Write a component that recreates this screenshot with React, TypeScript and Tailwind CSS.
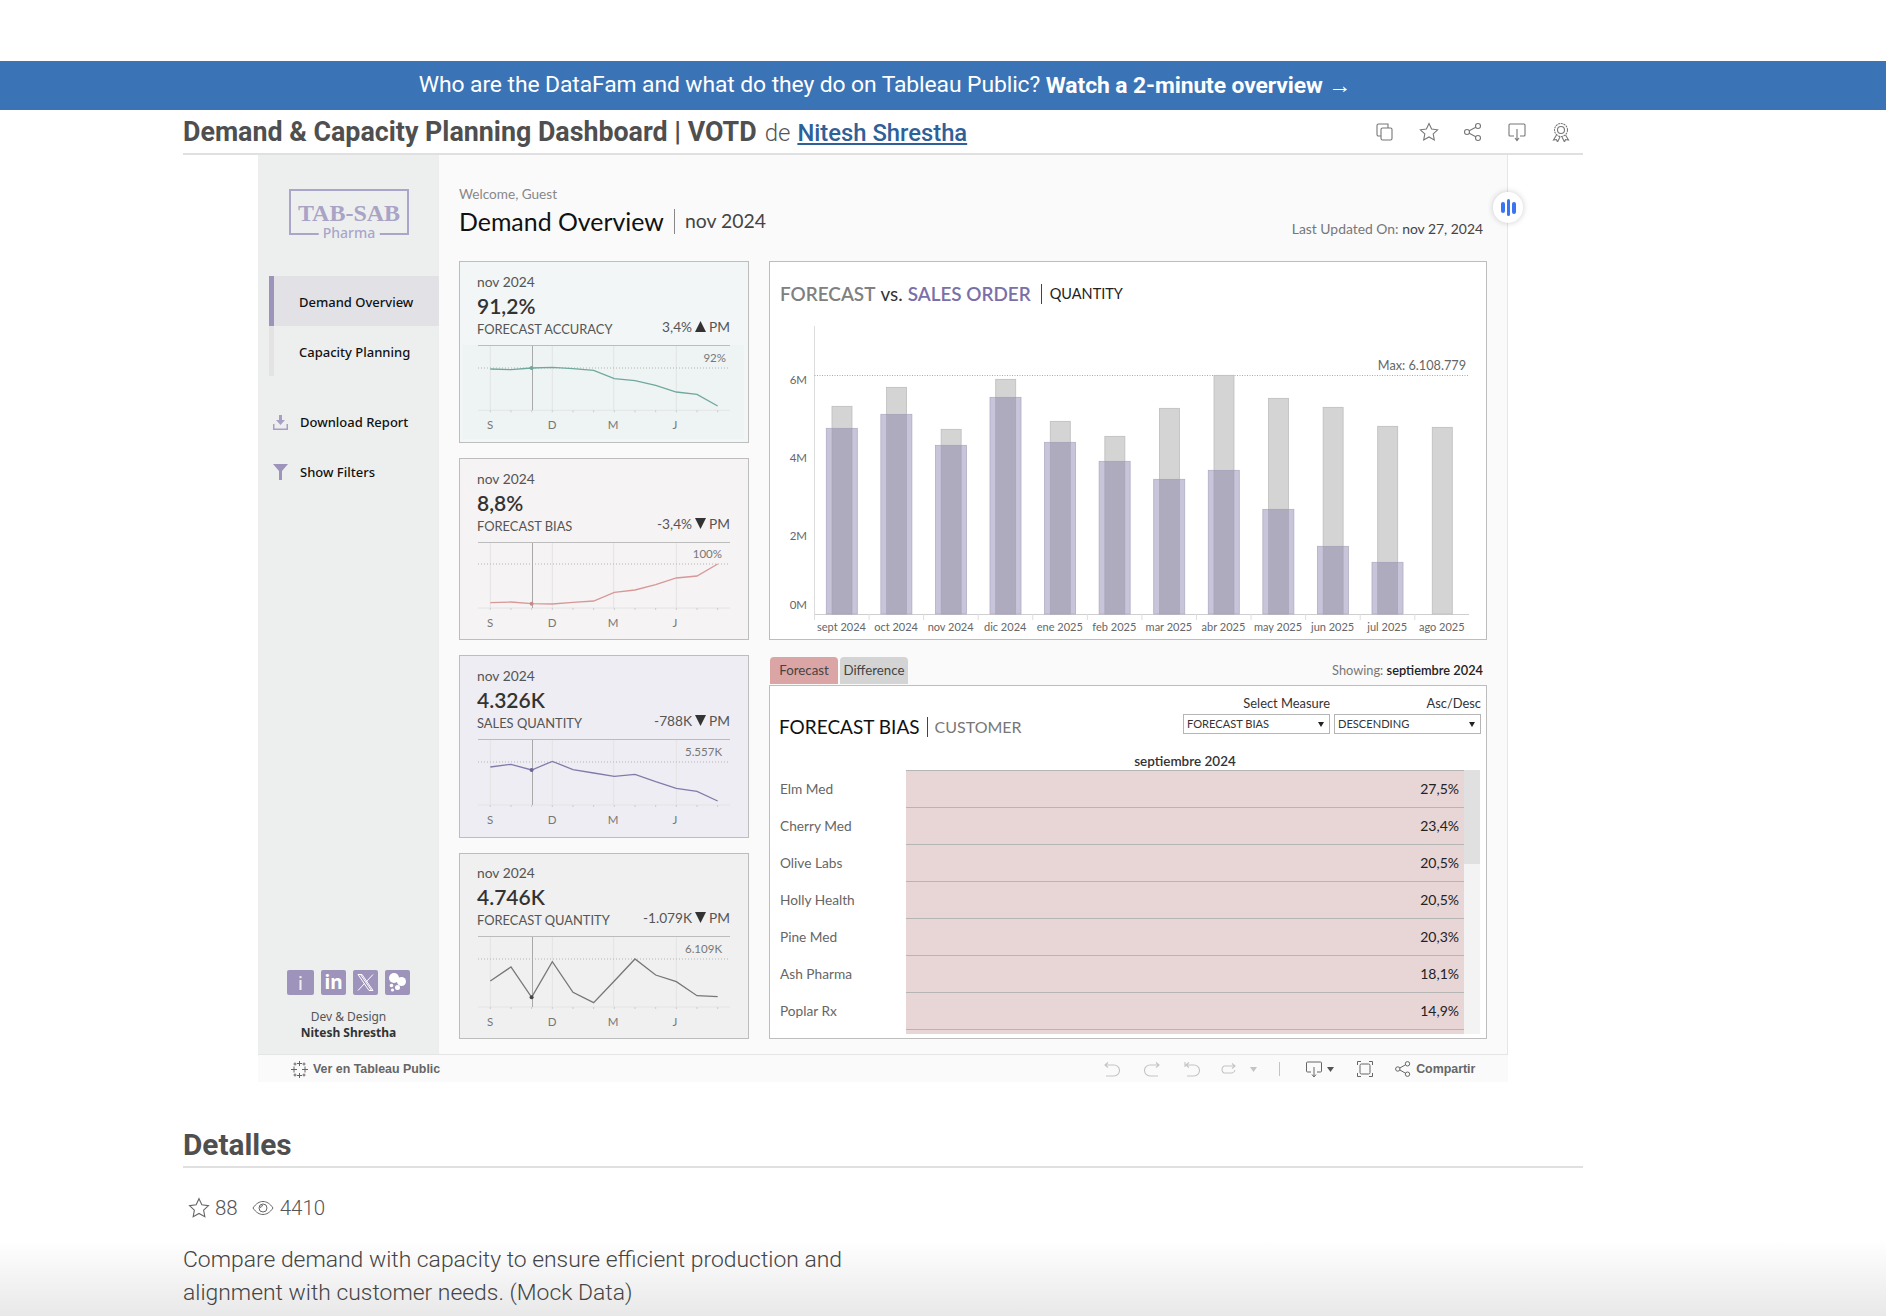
const months = ['sept 2024', 'oct 2024', 'nov 2024', 'dic 2024', 'ene 2025', 'feb 2025', 'mar 2025', 'abr 2025', 'may 2025', 'jun 2025', 'jul 2025', 'ago 2025'];
const forecastTops = [439, 382, 508, 358, 484, 529, 445, 346, 415, 442, 499, 502];
const salesTops = [505, 463, 556, 412, 547, 604, 658, 631, 748, 859, 907];

const customers = [
  ['Elm Med', '27,5%'],
  ['Cherry Med', '23,4%'],
  ['Olive Labs', '20,5%'],
  ['Holly Health', '20,5%'],
  ['Pine Med', '20,3%'],
  ['Ash Pharma', '18,1%'],
  ['Poplar Rx', '14,9%'],
  ['', ''],
];

const kpis = [
  {
    value: '91,2%', label: 'FORECAST ACCURACY', delta: '3,4%', up: true, max: '92%', maxEnd: 248,
    card: 'h-[182px] bg-[#f3f6f6]', spark: 'bg-[#eef3f3]', color: '#70a89d', dot: '#70a89d', axis: 65.3, dotted: 23, maxY: 13, top: 'pt-[12px]',
    ys: [643, 645, 640, 638, 642, 647, 672, 678, 692, 712, 719, 754].map((v) => (v - 571) / 3),
  },
  {
    value: '8,8%', label: 'FORECAST BIAS', delta: '-3,4%', up: false, max: '100%', maxEnd: 244,
    card: 'h-[182px] bg-[#f5f3f4]', spark: '', color: '#d79898', dot: '#c98888', axis: 66, dotted: 22, maxY: 12, top: 'pt-[12px]',
    ys: [459, 457, 462, 463, 458, 454, 428, 421, 405, 385, 379, 343].map((v) => (v - 277) / 3),
  },
  {
    value: '4.326K', label: 'SALES QUANTITY', delta: '-788K', up: false, max: '5.557K', maxEnd: 244,
    card: 'h-[183px] bg-[#eeedf3]', spark: '', color: '#827ba9', dot: '#6b6496', axis: 66, dotted: 23, maxY: 13, top: 'pt-[12px]',
    ys: [952, 944, 961, 935, 960, 970, 980, 974, 996, 1016, 1025, 1054].map((v) => (v - 868) / 3),
  },
  {
    value: '4.746K', label: 'FORECAST QUANTITY', delta: '-1.079K', up: false, max: '6.109K', maxEnd: 244,
    card: 'h-[186px] bg-[#f0f0f0]', spark: '', color: '#777777', dot: '#444444', axis: 71, dotted: 23, maxY: 13, top: 'pt-[11px]',
    ys: [424, 382, 473, 366, 458, 489, 424, 358, 406, 426, 468, 471].map((v) => (v - 289) / 3),
  },
];

function Sparkline({ k }: { k: (typeof kpis)[number] }) {
  const xs = k.ys.map((_, i) => 12.3 + i * 20.67);
  return (
    <svg width="252" height="94" className="block overflow-visible">
      <line x1="0" x2="252" y1="0.5" y2="0.5" stroke="#bcbcbc" />
      {[12.3, 74.3, 135.7, 198.3].map((x) => (
        <line key={x} x1={x} x2={x} y1="1" y2={k.axis} stroke="#e3e3e3" />
      ))}
      <line x1="0" x2="252" y1={k.axis} y2={k.axis} stroke="#e4e4e4" />
      {xs.map((x) => (
        <line key={x} x1={x} x2={x} y1={k.axis} y2={k.axis + 2} stroke="#cccccc" />
      ))}
      <line x1="0" x2="252" y1={k.dotted} y2={k.dotted} stroke="#b5b5b5" strokeDasharray="1 2" />
      <line x1="54.5" x2="54.5" y1="1" y2={k.axis} stroke="#a9a9a9" />
      <polyline points={k.ys.map((y, i) => `${xs[i]},${y}`).join(' ')} fill="none" stroke={k.color} strokeWidth="1.3" />
      <circle cx="53.6" cy={k.ys[2]} r="2" fill={k.dot} />
      <text x={k.maxEnd} y={k.maxY} dy="4" textAnchor="end" fontSize="11.5" fill="#777">{k.max}</text>
      {[['S', 12], ['D', 74], ['M', 135], ['J', 197]].map(([t, x]) => (
        <text key={t} x={x} y={k.axis + 15} dy="4" textAnchor="middle" fontSize="11.5" fill="#777">{t}</text>
      ))}
    </svg>
  );
}

function KpiCard({ k }: { k: (typeof kpis)[number] }) {
  return (
    <div className={`${k.card} ${k.top} border border-[#bdbdbd] pl-[17px] pr-[18px] text-[#555]`}>
      <div className="text-[13.8px] leading-[16px]">nov 2024</div>
      <div className="mt-[4px] text-[21px] leading-[24px] font-semibold text-[#333]">{k.value}</div>
      <div className="mt-[3px] flex h-[16px] justify-between">
        <span className="text-[12.9px] leading-[16px]">{k.label}</span>
        <span className="-mt-[5px] flex items-center gap-[3px] text-[13.7px] leading-[16px]">
          {k.delta}
          <svg width="11" height="11" viewBox="0 0 11 11">
            <polygon points={k.up ? '5.5,0 11,11 0,11' : '0,0 11,0 5.5,11'} fill="#333" />
          </svg>
          PM
        </span>
      </div>
      <div className={`-mx-[14px] mt-[8px] pl-[15px] ${k.spark}`}>
        <Sparkline k={k} />
      </div>
    </div>
  );
}

function BarChart() {
  const step = 54.57;
  const py = (v: number) => v / 3 - 60;
  return (
    <svg width="716" height="318" className="mt-[15px] block">
      <line x1="44.5" x2="44.5" y1="6" y2="294" stroke="#dddddd" />
      <line x1="44.5" x2="699" y1="294.5" y2="294.5" stroke="#cfcfcf" />
      <line x1="44.5" x2="699" y1="55.5" y2="55.5" stroke="#a8a8a8" strokeDasharray="1 1.5" />
      <text x="696" y="50" textAnchor="end" fontSize="12.7" fill="#666">Max: 6.108.779</text>
      {[['6M', 60], ['4M', 138], ['2M', 216], ['0M', 285]].map(([t, y]) => (
        <text key={t} x="37" y={y} dy="4" textAnchor="end" fontSize="11.5" fill="#666">{t}</text>
      ))}
      {months.map((m, i) => {
        const gx = 62 + i * step;
        const px = 56.3 + i * step;
        const gy = py(forecastTops[i]);
        const sy = i < salesTops.length ? py(salesTops[i]) : 0;
        return (
          <g key={m}>
            <line x1={44.5 + i * step} x2={44.5 + i * step} y1="294" y2="300" stroke="#dddddd" />
            <rect x={gx} y={gy} width="20" height={294 - gy} fill="#d4d4d4" stroke="#bdbdbd" strokeWidth="0.8" />
            {i < salesTops.length && (
              <>
                <rect x={px} y={sy} width="31" height={294 - sy} fill="#c8c5da" stroke="#b0adc4" strokeWidth="0.8" />
                <rect x={gx} y={sy} width="20" height={294 - sy} fill="#aeabbe" stroke="#a5a2b8" strokeWidth="0.6" />
              </>
            )}
            <text x={71.5 + i * step} y="307" dy="4" textAnchor="middle" fontSize="11" fill="#666">{m}</text>
          </g>
        );
      })}
    </svg>
  );
}

function Dropdown({ label }: { label: string }) {
  return (
    <div className="flex h-[20px] w-[147px] items-center justify-between border border-[#b5b5b5] bg-white pl-[3px] pr-[5px] text-[11.1px] text-[#333]">
      {label}
      <svg width="6" height="5" viewBox="0 0 6 5"><polygon points="0,0 6,0 3,5" fill="#222" /></svg>
    </div>
  );
}

function HeaderIcon({ children }: { children: React.ReactNode }) {
  return (
    <svg width="20" height="20" viewBox="0 0 20 20" fill="none" stroke="#777" strokeWidth="1.1">{children}</svg>
  );
}

function Logo() {
  return (
    <div className="relative ml-[31px] h-[46px] w-[120px] border-2 border-[#aaa5c9] text-center">
      <div className="pt-[12px] font-['Liberation_Serif',serif] text-[24px] leading-[21px] font-bold text-[#a9a3c6]">TAB-SAB</div>
      <div className="absolute -bottom-[7px] left-1/2 -translate-x-1/2 bg-[#edefef] px-[4px] text-[14px] leading-[15px] text-[#aaa5c9]">Pharma</div>
    </div>
  );
}

function Social() {
  return (
    <div className="ml-[29px] flex gap-[7px]">
      <div className="flex h-[25px] w-[27px] items-center justify-center rounded-[2px] bg-[#9e93bb] text-[18px] leading-none font-medium text-[#eee]">i</div>
      <div className="flex h-[25px] w-[25px] items-center justify-center rounded-[2px] bg-[#9e93bb] text-[19px] leading-none font-bold text-white">in</div>
      <div className="flex h-[25px] w-[25px] items-center justify-center rounded-[2px] bg-[#9e93bb]">
        <svg width="19" height="19" viewBox="0 0 19 19" fill="none" stroke="#fff" strokeWidth="1">
          <path d="M2 1.5h4l11 16h-4zM4.5 1.5l11 16M17 1.5l-7 7.5M8.5 10.5l-6.5 7" />
        </svg>
      </div>
      <div className="flex h-[25px] w-[25px] items-center justify-center rounded-[2px] bg-[#9e93bb]">
        <svg width="21" height="21" viewBox="0 0 21 21" fill="#fff">
          <circle cx="7" cy="6" r="5" />
          <circle cx="14.5" cy="9.5" r="4.5" />
          <circle cx="10.5" cy="15.5" r="2.5" />
          <circle cx="4.5" cy="13.5" r="1.8" />
          <circle cx="5.5" cy="18" r="1.6" />
        </svg>
      </div>
    </div>
  );
}

function Sidebar() {
  return (
    <aside className="flex w-[181px] shrink-0 flex-col bg-[#edefef] pt-[34px] pb-[14px] font-['Noto_Sans',sans-serif] text-[13px] font-medium text-[#111]">
      <Logo />
      <div className="mt-[41px] ml-[11px]">
        <div className="flex h-[50px] items-center border-l-[5px] border-[#9e93bb] bg-[#e2e1e6] pt-[3px] pl-[25px]">Demand Overview</div>
        <div className="flex h-[50px] items-center border-l-[5px] border-[#e3e3e3] pt-[3px] pl-[25px]">Capacity Planning</div>
      </div>
      <div className="mt-[35px] ml-[15px] flex h-[24px] items-center gap-[12px]">
        <svg width="15" height="15" viewBox="0 0 15 15" fill="#a79fc4" className="-mt-[2px]">
          <path d="M6 0h3v5h3l-4.5 5L3 5h3zM0 9h1.5v4.500h12V9H15v6H0z" />
        </svg>
        Download Report
      </div>
      <div className="mt-[26px] ml-[15px] flex h-[24px] items-center gap-[12px]">
        <svg width="15" height="16" viewBox="0 0 15 16" fill="#9e93bb" className="-mt-[2px]"><path d="M0 0h15L9 7v9H6V7z" /></svg>
        Show Filters
      </div>
      <div className="mt-auto">
        <Social />
        <div className="mt-[14px] text-center text-[12px] leading-[15px] font-normal text-[#555]">Dev &amp; Design</div>
        <div className="mt-px text-center text-[12px] leading-[15px] font-bold text-[#333]">Nitesh Shrestha</div>
      </div>
    </aside>
  );
}

function CustomerPanel() {
  return (
    <div className="mt-px h-[354px] border border-[#bdbdbd] bg-white pt-[10px]">
      <div className="flex h-[43px] justify-between pr-[5px] pl-[9px]">
        <div className="mt-[19px] flex items-center text-[19px] leading-[24px] text-[#111]">
          FORECAST BIAS
          <span className="mx-[7px] h-[20px] w-px bg-[#444]" />
          <span className="text-[16px] text-[#777]">CUSTOMER</span>
        </div>
        <div className="flex gap-[4px] text-[12.9px] leading-[14px] text-[#333]">
          <div className="text-right">
            <div className="mb-[4px]">Select Measure</div>
            <Dropdown label="FORECAST BIAS" />
          </div>
          <div className="text-right">
            <div className="mb-[4px]">Asc/Desc</div>
            <Dropdown label="DESCENDING" />
          </div>
        </div>
      </div>
      <div className="mt-[14px] h-[17px] pl-[136px] pr-[22px] text-center text-[13.5px] leading-[16px] font-semibold text-[#333]">septiembre 2024</div>
      <div className="flex h-[264px] pr-[6px]">
        <div className="min-w-0 flex-1 overflow-hidden">
          {customers.map(([name, value], i) => (
            <div key={i} className="flex h-[37px]">
              <div className="flex w-[136px] shrink-0 items-center pt-[2px] pl-[10px] text-[13.7px] text-[#666]">{name}</div>
              <div className="flex flex-1 items-center justify-end border-t border-[#b5b5b5] bg-[#e8d5d6] pr-[5px] pb-[1px] text-[14px] text-[#222]">{value}</div>
            </div>
          ))}
        </div>
        <div className="w-[16px] bg-[#f3f3f3]">
          <div className="h-[94px] bg-[#e0e0e0]" />
        </div>
      </div>
    </div>
  );
}

function Toolbar() {
  const common = { fill: 'none', stroke: '#c4c4c4', strokeWidth: 1.1 };
  return (
    <div className="flex h-[28px] items-center border-t border-[#e5e5e5] bg-[#fafafa] pt-px pl-[33px] font-['Liberation_Sans',sans-serif] text-[12.4px] font-bold text-[#666]">
      <svg width="17" height="17" viewBox="0 0 17 17" stroke="#666" strokeWidth="1">
        <path d="M8.5 0v5M6 2.5h5M8.5 12v5M6 14.5h5M3 5.5v6M0 8.5h6M14 5.5v6M11 8.5h6M4 1.5v3M2.5 3h3M13 1.5v3M11.5 3h3M4 12.500v3M2.5 14h3M13 12.500v3M11.5 14h3" />
      </svg>
      <span className="ml-[5px]">Ver en Tableau Public</span>
      <svg width="16" height="16" viewBox="0 0 16 16" {...common} className="ml-[664px]"><path d="M4 1.500 1 4l3 2.500M1 4h9a5 5 0 0 1 0 11H2" /></svg>
      <svg width="16" height="16" viewBox="0 0 16 16" {...common} className="ml-[24px]"><path d="M12 1.500 15 4l-3 2.500M15 4H6a5 5 0 0 0 0 11h8" /></svg>
      <svg width="16" height="16" viewBox="0 0 16 16" {...common} className="ml-[24px]"><path d="M1 1v5M5 1.500 2 4l3 2.500M2 4h8a5 5 0 0 1 0 11H3" /></svg>
      <svg width="16" height="16" viewBox="0 0 16 16" {...common} className="ml-[20px]"><path d="M12 2.500 15 5l-3 2.500M15 5H4a4 4 0 0 0 0 7h8a4 4 0 0 0 3-3" /></svg>
      <svg width="7" height="5" viewBox="0 0 7 5" className="ml-[14px]"><polygon points="0,0 7,0 3.500,5" fill="#c4c4c4" /></svg>
      <span className="ml-[22px] h-[14px] w-px bg-[#c4c4c4]" />
      <svg width="16" height="17" viewBox="0 0 16 17" fill="none" stroke="#666" strokeWidth="1" className="ml-[26px]"><path d="M5 11H1.500a1 1 0 0 1-1-1V2a1 1 0 0 1 1-1h13a1 1 0 0 1 1 1v8a1 1 0 0 1-1 1H11M8 6v9M6 13.500l2 2.500 2-2.500" /></svg>
      <svg width="7" height="5" viewBox="0 0 7 5" className="ml-[5px]"><polygon points="0,0 7,0 3.500,5" fill="#555" /></svg>
      <svg width="16" height="16" viewBox="0 0 16 16" fill="none" stroke="#666" strokeWidth="1" className="ml-[23px]"><path d="M0.500 4V0.500H4M12 0.500h3.500V4M15.500 12v3.500H12M4 15.500H0.500V12" /><rect x="3" y="3" width="10" height="10" rx="1.500" /></svg>
      <svg width="16" height="16" viewBox="0 0 16 16" fill="none" stroke="#666" strokeWidth="1" className="ml-[22px]"><circle cx="2.800" cy="8" r="2.200" /><circle cx="12.500" cy="2.800" r="2.200" /><circle cx="12.500" cy="13.200" r="2.200" /><path d="M4.800 7 10.500 3.800M4.800 9l5.700 3.200" /></svg>
      <span className="ml-[5px]">Compartir</span>
    </div>
  );
}

function Dashboard() {
  return (
    <div className="relative ml-[258px] w-[1250px] font-['Lato',sans-serif]">
      <div className="flex h-[899px] bg-[#fafafa]">
        <Sidebar />
        <main className="flex-1 border-r border-[#e6e6e6] pl-[20px] pr-[20px]">
          <header className="flex h-[106px] items-start justify-between pt-[32px]">
            <div>
              <div className="text-[13.6px] leading-[14px] text-[#888]">Welcome, Guest</div>
              <div className="mt-[5px] flex h-[30px] items-center text-[24.9px] leading-[30px] text-[#111]">
                Demand Overview
                <span className="mx-[10px] h-[25px] w-px bg-[#888]" />
                <span className="text-[19.4px] text-[#444]">nov 2024</span>
              </div>
            </div>
            <div className="mt-[35px] mr-[4px] text-[13.9px] leading-[14px] text-[#777]">
              Last Updated On: <span className="text-[#444]">nov 27, 2024</span>
            </div>
          </header>
          <div className="flex gap-[20px]">
            <div className="flex w-[290px] shrink-0 flex-col gap-[15px]">
              {kpis.map((k) => <KpiCard key={k.label} k={k} />)}
            </div>
            <div className="w-[718px]">
              <div className="h-[379px] border border-[#bdbdbd] bg-white pt-[21px]">
                <div className="flex h-[22px] items-center pl-[10px] text-[18.9px] leading-[22px]">
                  <span className="font-semibold text-[#808080]">FORECAST</span>
                  <span className="ml-[5px] text-[#333]">vs.</span>
                  <span className="ml-[5px] font-semibold text-[#7b6fa8]">SALES ORDER</span>
                  <span className="ml-[10px] mr-[8px] h-[20px] w-px bg-[#444]" />
                  <span className="text-[14.5px] text-[#222]">QUANTITY</span>
                </div>
                <BarChart />
              </div>
              <div className="mt-[17px] flex items-end justify-between">
                <div className="flex gap-[2px] pl-px text-[13.3px] text-[#444]">
                  <div className="flex h-[27px] w-[68px] items-center justify-center rounded-t-[4px] bg-[#dba5a5]">Forecast</div>
                  <div className="flex h-[27px] w-[68px] items-center justify-center rounded-t-[4px] bg-[#d4d4d4]">Difference</div>
                </div>
                <div className="mr-[4px] mb-[4px] text-[12.8px] text-[#777]">
                  Showing: <span className="font-semibold text-[#222]">septiembre 2024</span>
                </div>
              </div>
              <CustomerPanel />
            </div>
          </div>
        </main>
      </div>
      <Toolbar />
      <div className="absolute top-[37px] right-[-15px] flex h-[31px] w-[30px] items-center justify-center gap-[2px] rounded-full bg-white shadow-[0_0_6px_rgba(0,0,0,0.2)]">
        <span className="h-[11px] w-[4px] rounded-full bg-[#3b74f0]" />
        <span className="h-[17px] w-[3px] rounded-full bg-[#3b74f0]" />
        <span className="h-[12px] w-[4px] rounded-full bg-[#3b74f0]" />
      </div>
    </div>
  );
}

export default function App() {
  return (
    <div className="relative h-[1316px] overflow-hidden bg-white pt-[61px] font-['Roboto',sans-serif]">
      <div className="flex h-[49px] items-center justify-center bg-[#3a73b6] pr-[116px] text-[22.9px] font-normal tracking-[-0.1px] text-white">
        Who are the DataFam and what do they do on Tableau Public?&nbsp;<b className="font-bold">Watch a 2-minute overview <span className="font-['Liberation_Sans',sans-serif] font-normal">→</span></b>
      </div>

      <div className="ml-[183px] w-[1400px]">
        <div className="flex h-[45px] items-center justify-between border-b-2 border-[#e0e0e0] pr-[12px]">
          <h1 className="flex items-baseline pt-[1px] text-[26.8px] font-bold text-[#4f4f4f]">
            Demand &amp; Capacity Planning Dashboard | VOTD
            <span className="ml-[8px] text-[24px] font-light text-[#555]">de</span>
            <a className="ml-[7px] text-[23.8px] font-medium text-[#2e6099] underline underline-offset-2">Nitesh Shrestha</a>
          </h1>
          <div className="flex gap-[24px]">
            <HeaderIcon>
              <path d="M6 14H3.500A1.500 1.500 0 0 1 2 12.500V3.500A1.500 1.500 0 0 1 3.500 2H13v4" />
              <rect x="6" y="6" width="11" height="12" rx="1.500" />
            </HeaderIcon>
            <HeaderIcon>
              <path d="M10 1.500l2.600 5.500 6 .8-4.400 4.100 1.100 6-5.300-2.900-5.300 2.900 1.100-6L1.400 7.800l6-.8z" />
            </HeaderIcon>
            <HeaderIcon>
              <circle cx="4" cy="10" r="2.500" /><circle cx="15" cy="4" r="2.500" /><circle cx="15" cy="16" r="2.500" />
              <path d="M6.200 8.800 12.800 5.200M6.200 11.200l6.600 3.600" />
            </HeaderIcon>
            <HeaderIcon>
              <path d="M7 14H3a1 1 0 0 1-1-1V3a1 1 0 0 1 1-1h14a1 1 0 0 1 1 1v10a1 1 0 0 1-1 1h-4M10 7v11M8 16l2 2.500 2-2.500" />
            </HeaderIcon>
            <HeaderIcon>
              <circle cx="10" cy="8" r="6.500" strokeDasharray="2 0.700" /><circle cx="10" cy="8" r="3.500" />
              <path d="M5.500 13 2.500 18l3-.500 1 2.500 2.500-5M14.500 13l3 5-3-.500-1 2.500-2.500-5" />
            </HeaderIcon>
          </div>
        </div>
      </div>

      <Dashboard />

      <div className="relative z-10 ml-[183px] w-[1400px] text-[#555]">
        <h2 className="mt-[45px] h-[41px] border-b-2 border-[#e0e0e0] text-[29.8px] leading-[36px] font-bold text-[#4f4f4f]">Detalles</h2>
        <div className="mt-[26px] flex items-center pl-[5px] text-[20.5px] leading-[28px] font-light">
          <svg width="22" height="22" viewBox="0 0 20 20" fill="none" stroke="#666" strokeWidth="1"><path d="M10 1.500l2.600 5.500 6 .8-4.400 4.100 1.100 6-5.300-2.900-5.300 2.900 1.100-6L1.400 7.800l6-.8z" /></svg>
          <span className="ml-[5px]">88</span>
          <svg width="22" height="16" viewBox="0 0 22 16" fill="none" stroke="#666" strokeWidth="1" className="ml-[14px]"><path d="M1 8c3-4.500 6.500-6.500 10-6.500S18 3.500 21 8c-3 4.500-6.500 6.500-10 6.500S4 12.500 1 8z" /><circle cx="11" cy="8" r="4" /><path d="M8.500 8a2.500 2.500 0 0 1 2.500-2.500" /></svg>
          <span className="ml-[6px]">4410</span>
        </div>
        <p className="mt-[21px] w-[720px] text-[22.9px] leading-[33px] font-light text-[#444]">
          Compare demand with capacity to ensure efficient production and alignment with customer needs. (Mock Data)
        </p>
      </div>

      {/* fade at the bottom of the page */}
      <div className="absolute right-0 bottom-0 left-0 h-[76px] bg-gradient-to-b from-transparent to-[#e8e8e8]" />
    </div>
  );
}
